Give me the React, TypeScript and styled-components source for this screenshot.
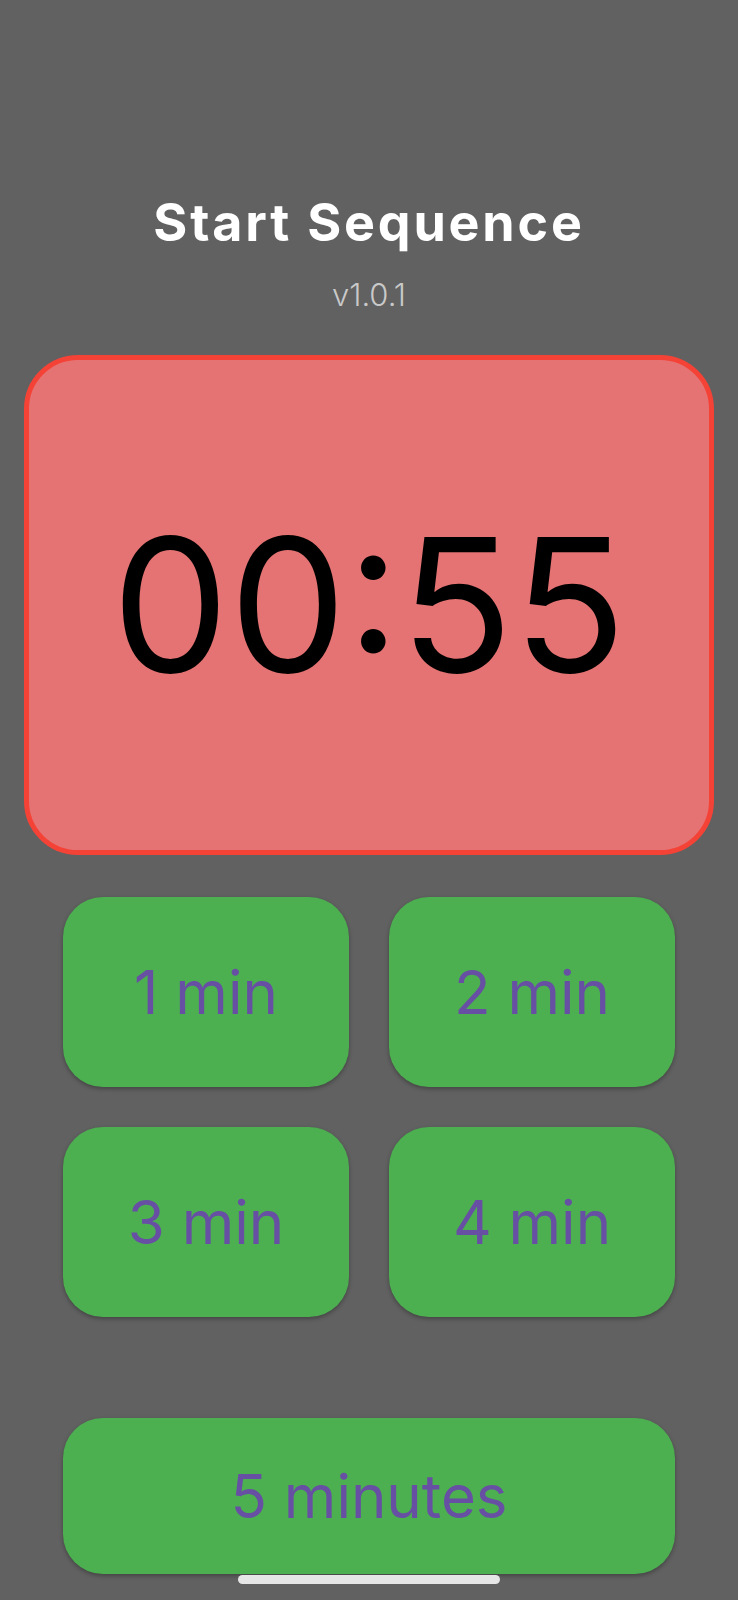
import React from "react";
import styled, { createGlobalStyle } from "styled-components";

const GlobalStyle = createGlobalStyle`
  html, body {
    margin: 0;
    padding: 0;
    background: #616161;
  }
  body {
    font-family: Inter, "Noto Sans", "Liberation Sans", sans-serif;
  }
`;

const presets = [
  { id: 1, label: "1 min" },
  { id: 2, label: "2 min" },
  { id: 3, label: "3 min" },
  { id: 4, label: "4 min" },
];

const App = () => {
  return (
    <Screen>
      <GlobalStyle />
      <Title>Start Sequence</Title>
      <Version>v1.0.1</Version>
      <TimerBox>
        <TimerText>00:55</TimerText>
      </TimerBox>
      <PresetGrid>
        {presets.map(p => (
          <PresetButton key={p.id}>{p.label}</PresetButton>
        ))}
      </PresetGrid>
      <WideButton>5 minutes</WideButton>
      <HomeIndicator />
    </Screen>
  );
};

export default App;

const Screen = styled.div`
  position: relative;
  width: 738px;
  height: 1600px;
  box-sizing: border-box;
  padding-top: 197px;
  display: flex;
  flex-direction: column;
  align-items: center;
  overflow: hidden;
`;

const Title = styled.h1`
  margin: 0;
  font-size: 52px;
  line-height: 52px;
  font-weight: 700;
  letter-spacing: 2.8px;
  color: #ffffff;
`;

const Version = styled.div`
  margin-top: 30px;
  font-size: 31px;
  line-height: 31px;
  font-weight: 300;
  color: #c9c9c9;
`;

const TimerBox = styled.div`
  margin-top: 45px;
  width: 690px;
  height: 500px;
  box-sizing: border-box;
  border: 5px solid #f44336;
  border-radius: 54px;
  background: #e57373;
  display: flex;
  align-items: center;
  justify-content: center;
`;

const TimerText = styled.div`
  font-size: 186px;
  line-height: 1;
  font-weight: 400;
  color: #000000;
`;

const PresetGrid = styled.div`
  margin-top: 42px;
  display: grid;
  grid-template-columns: 286px 286px;
  grid-auto-rows: 190px;
  gap: 40px;
`;

const PresetButton = styled.button`
  border: none;
  border-radius: 40px;
  background: #4caf50;
  color: #6750a4;
  font-family: inherit;
  font-size: 60px;
  font-weight: 400;
  box-shadow: 0 2px 4px rgba(0, 0, 0, 0.3);
  display: flex;
  align-items: center;
  justify-content: center;
  padding: 0;
`;

const WideButton = styled(PresetButton)`
  margin-top: 101px;
  width: 612px;
  height: 156px;
`;

const HomeIndicator = styled.div`
  position: absolute;
  left: 238px;
  top: 1575px;
  width: 262px;
  height: 9px;
  border-radius: 5px;
  background: #e6e6e6;
`;
